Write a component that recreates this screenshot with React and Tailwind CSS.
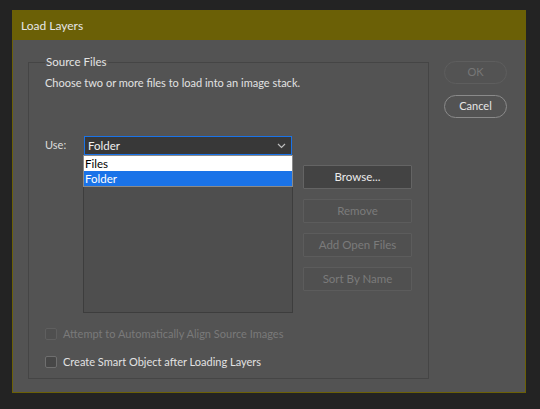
import React from "react";

const font = { fontFamily: "Lato, 'Noto Sans', sans-serif" };

const SideButton = ({ children, disabled }) => (
    <button
        className={
            disabled
                ? "w-[109px] h-[24px] border border-[#5c5c5c] bg-[#505050] text-[#7b7b7b] text-[11.5px] rounded-[1px]"
                : "w-[109px] h-[24px] border border-[#646464] bg-[#434343] text-[#ececec] text-[11.5px] rounded-[1px]"
        }
    >
        {children}
    </button>
);

const Check = ({ label, disabled }) => (
    <label className="flex items-center h-[16px] gap-[6px]">
        <span
            className={
                disabled
                    ? "w-[12px] h-[12px] border border-[#5f5f5f] bg-[#4f4f4f] rounded-[2px]"
                    : "w-[12px] h-[12px] border border-[#6f6f6f] bg-[#474747] rounded-[2px]"
            }
        />
        <span className={disabled ? "text-[#7a7a7a]" : "text-[#e2e2e2]"}>{label}</span>
    </label>
);

export default function App() {
    return (
        <div className="w-[540px] h-[409px] bg-[#232323] pt-[10px] pl-[12px] text-[11px]" style={font}>
            <div className="w-[514px] h-[383px] border border-[#6b6006] bg-[#535353] flex flex-col">
                <div className="h-[29px] bg-[#6b6006] flex items-center px-[8px] text-[#e6e6e6] text-[12px]">
                    Load Layers
                </div>
                <div className="flex pl-[15px] pt-[14px]">
                    <fieldset className="w-[401px] border border-[#454545] pl-[16px] pb-[8px]">
                        <legend className="px-[1px] leading-[16px] text-[#e4e4e4] text-[11.5px]">Source Files</legend>
                        <p className="mt-[5px] leading-[16px] text-[#e2e2e2]">
                            Choose two or more files to load into an image stack.
                        </p>
                        <div className="mt-[45px] flex items-center">
                            <span className="w-[39px] text-[#dcdcdc]">Use:</span>
                            <div className="relative w-[208px] h-[19px] border border-[#1a73e8] bg-[#383838] flex items-center justify-between pl-[3px] pr-[5px] text-[#f0f0f0] text-[11.5px]">
                                <span>Folder</span>
                                <svg width="9" height="6" viewBox="0 0 9 6" fill="none">
                                    <path d="M1 1l3.5 3.5L8 1" stroke="#bdbdbd" strokeWidth="1.2" />
                                </svg>
                                <div className="absolute left-[-2px] top-[18px] w-[210px] z-10 border border-[#8a8a8a] bg-white">
                                    <div className="h-[15px] leading-[15px] pl-[1px] text-black">Files</div>
                                    <div className="h-[15px] leading-[15px] pl-[1px] bg-[#1a73e8] text-white">Folder</div>
                                </div>
                            </div>
                        </div>
                        <div className="mt-[10px] flex">
                            <div className="ml-[38px] w-[210px] h-[148px] border border-[#3d3d3d] bg-[#4e4e4e]" />
                            <div className="ml-[10px] flex flex-col gap-[10px]">
                                <SideButton>Browse...</SideButton>
                                <SideButton disabled>Remove</SideButton>
                                <SideButton disabled>Add Open Files</SideButton>
                                <SideButton disabled>Sort By Name</SideButton>
                            </div>
                        </div>
                        <div className="mt-[13px]">
                            <Check disabled label="Attempt to Automatically Align Source Images" />
                        </div>
                        <div className="mt-[12px]">
                            <Check label="Create Smart Object after Loading Layers" />
                        </div>
                    </fieldset>
                    <div className="ml-[15px] mt-[7px] flex flex-col gap-[11px]">
                        <button className="w-[63px] h-[23px] rounded-full border border-[#5e5e5e] text-[#777]">OK</button>
                        <button className="w-[63px] h-[23px] rounded-full border border-[#8a8a8a] text-[#e6e6e6]">Cancel</button>
                    </div>
                </div>
            </div>
        </div>
    );
}
